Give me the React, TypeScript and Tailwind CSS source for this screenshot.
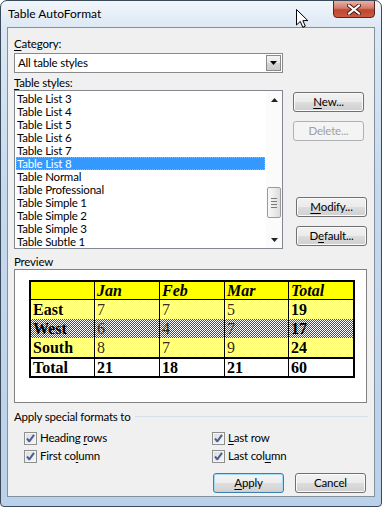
import React from 'react';

const styles = [
  'Table List 3',
  'Table List 4',
  'Table List 5',
  'Table List 6',
  'Table List 7',
  'Table List 8',
  'Table Normal',
  'Table Professional',
  'Table Simple 1',
  'Table Simple 2',
  'Table Simple 3',
  'Table Subtle 1',
];

const rows = [
  { label: 'East', values: ['7', '7', '5'], total: '19', pattern: 'yellow' },
  { label: 'West', values: ['6', '4', '7'], total: '17', pattern: 'red' },
  { label: 'South', values: ['8', '7', '9'], total: '24', pattern: 'yellow' },
];

function VistaButton({
  children,
  disabled,
  isDefault,
}: {
  children: React.ReactNode;
  disabled?: boolean;
  isDefault?: boolean;
}) {
  if (disabled) {
    return (
      <div className="w-[71px] h-[20px] rounded-[3px] border border-[#adb2b5] bg-[#f4f4f4] flex items-center justify-center text-[#a0a0a0] leading-none">
        {children}
      </div>
    );
  }
  return (
    <div
      className={
        isDefault
          ? 'w-[71px] h-[20px] rounded-[3px] border border-[#3c7fb1] bg-[linear-gradient(180deg,#f4f4f4_0%,#ececec_50%,#dedede_50%,#d2d2d2_100%)] shadow-[inset_0_0_0_1px_#a8daf6] flex items-center justify-center leading-none'
          : 'w-[71px] h-[20px] rounded-[3px] border border-[#707070] bg-[linear-gradient(180deg,#f2f2f2_0%,#ebebeb_50%,#dddddd_50%,#cfcfcf_100%)] shadow-[inset_0_0_0_1px_#fbfbfb] flex items-center justify-center leading-none'
      }
    >
      {children}
    </div>
  );
}

function CheckBox({ label }: { label: React.ReactNode }) {
  return (
    <div className="h-[18px] flex items-center gap-[3px]">
      <div className="w-[13px] h-[13px] border border-[#8e8f8f] bg-[linear-gradient(135deg,#dcdcdc_0%,#f6f6f6_100%)] shadow-[inset_0_0_0_1px_#f4f4f4] flex items-center justify-center">
        <svg width="11" height="11" viewBox="0 0 11 11">
          <path d="M2 5.5 L4.3 8.3 L9 1.8" fill="none" stroke="#4a5f92" strokeWidth="2" strokeLinejoin="round" />
        </svg>
      </div>
      <span className="leading-none">{label}</span>
    </div>
  );
}

function Cell({
  children,
  w,
  className = '',
}: {
  children?: React.ReactNode;
  w: string;
  className?: string;
}) {
  return <div className={`${w} pl-[2px] ${className}`}>{children}</div>;
}

export default function App() {
  return (
    <div className="w-[382px] h-[507px] relative overflow-hidden rounded-t-[7px] rounded-b-[4px] border border-[#3b4a5a] bg-[linear-gradient(180deg,#f2f6fb_0px,#dce8f4_26px,#c6daee_180px,#bad1ea_100%)] flex flex-col font-['Lato','Noto_Sans',sans-serif] text-[11.5px] tracking-[-0.2px] text-black">
      {/* Title bar */}
      <div className="h-[26px] pl-[7px] flex items-center text-[12px] tracking-normal text-black">Table AutoFormat</div>

      {/* Close button */}
      <div className="absolute top-[-1px] right-[6px] w-[42px] h-[18px] rounded-b-[4px] border border-[#5b231d] bg-[linear-gradient(180deg,#eab1a6_0%,#d47a6b_45%,#c0462f_55%,#c95a3e_100%)] flex items-center justify-center">
        <svg width="14" height="11" viewBox="0 0 14 11">
          <path d="M2 1.5 L12 9.5 M12 1.5 L2 9.5" stroke="#4a1a14" strokeWidth="4" strokeLinecap="square" />
          <path d="M2 1.5 L12 9.5 M12 1.5 L2 9.5" stroke="#ffffff" strokeWidth="2" strokeLinecap="square" />
        </svg>
      </div>

      {/* Mouse cursor */}
      <svg className="absolute left-[295px] top-[8px]" width="13" height="20" viewBox="0 0 13 20">
        <path d="M0.5 0.5 L0.5 16 L4.3 12.4 L6.8 18.3 L9.3 17.2 L6.9 11.6 L11.8 11.6 Z" fill="#ffffff" stroke="#000000" strokeWidth="1" strokeLinejoin="round" />
      </svg>

      {/* Client area */}
      <div className="mx-[6px] h-[470px] border border-[#83909e] bg-[#f0f0f0] px-[6px] pt-[8px] flex flex-col">
        <div className="h-[15px] leading-[15px]">
          <span className="underline underline-offset-2">C</span>ategory:
        </div>
        <div className="mt-[2px] w-[269px] h-[20px] border border-[#8a8a8a] bg-white flex items-center">
          <span className="flex-1 pl-[3px] leading-none">All table styles</span>
          <div className="w-[15px] h-[16px] mr-[1px] border border-[#8a8a8a] bg-[linear-gradient(180deg,#f4f4f4_0%,#e6e6e6_50%,#d4d4d4_51%,#cbcbcb_100%)] flex items-center justify-center">
            <svg width="7" height="4" viewBox="0 0 7 4">
              <path d="M0 0 L7 0 L3.5 4 Z" fill="#000" />
            </svg>
          </div>
        </div>
        <div className="mt-[2px] h-[15px] leading-[15px]">
          <span className="underline underline-offset-2">T</span>able styles:
        </div>

        <div className="flex">
          {/* List box */}
          <div className="w-[269px] h-[159px] border border-[#828790] bg-white flex">
            <div className="flex-1 pt-[1px] px-[1px]">
              {styles.map((s) =>
                s === 'Table List 8' ? (
                  <div
                    key={s}
                    className="h-[13px] leading-[13px] pl-[1px] bg-[#3399ff] text-white outline outline-1 outline-dotted outline-[#f0a040] -outline-offset-1"
                  >
                    {s}
                  </div>
                ) : (
                  <div key={s} className="h-[13px] leading-[13px] pl-[1px]">
                    {s}
                  </div>
                )
              )}
            </div>
            {/* Scrollbar */}
            <div className="w-[16px] flex flex-col bg-[#fbfbfb]">
              <div className="h-[17px] flex items-center justify-center">
                <svg width="7" height="4" viewBox="0 0 7 4">
                  <path d="M0 4 L7 4 L3.5 0 Z" fill="#222" />
                </svg>
              </div>
              <div className="flex-1 flex flex-col">
                <div className="h-[79px]" />
                <div className="ml-[1px] w-[14px] h-[31px] rounded-[2px] border border-[#9b9b9b] bg-[linear-gradient(90deg,#f8f8f8_0%,#ececec_50%,#dcdcdc_100%)] flex flex-col items-center justify-center gap-[2px]">
                  <div className="w-[6px] h-px bg-[#7a7a7a]" />
                  <div className="w-[6px] h-px bg-[#7a7a7a]" />
                  <div className="w-[6px] h-px bg-[#7a7a7a]" />
                  <div className="w-[6px] h-px bg-[#7a7a7a]" />
                </div>
              </div>
              <div className="h-[17px] flex items-center justify-center">
                <svg width="7" height="4" viewBox="0 0 7 4">
                  <path d="M0 0 L7 0 L3.5 4 Z" fill="#222" />
                </svg>
              </div>
            </div>
          </div>

          {/* Right buttons */}
          <div className="ml-[10px] pt-[2px] flex flex-col">
            <VistaButton>
              <span className="underline underline-offset-2">N</span>ew...
            </VistaButton>
            <div className="mt-[9px]">
              <VistaButton disabled>Delete...</VistaButton>
            </div>
            <div className="mt-[56px] ml-[3px]">
              <VistaButton>
                <span className="underline underline-offset-2">M</span>odify...
              </VistaButton>
            </div>
            <div className="mt-[9px] ml-[3px]">
              <VistaButton>
                D<span className="underline underline-offset-2">e</span>fault...
              </VistaButton>
            </div>
          </div>
        </div>

        <div className="mt-[5px] h-[15px] leading-[15px]">Preview</div>
        <div className="w-[353px] h-[134px] border border-[#828282] bg-white pt-[10px] pl-[14px]">
          <div className="w-[326px] border-2 border-black font-['Liberation_Serif',serif] text-[16px] tracking-normal leading-[19px]">
            {/* Header */}
            <div className="flex h-[18px] bg-[#ffff00] border-b border-black font-bold italic leading-[18px]">
              <Cell w="w-[64px]" className="border-r border-black" />
              <Cell w="w-[65px]" className="border-r border-black">Jan</Cell>
              <Cell w="w-[65px]" className="border-r border-black">Feb</Cell>
              <Cell w="w-[64px]" className="border-r border-black">Mar</Cell>
              <Cell w="w-[64px]">Total</Cell>
            </div>
            {rows.map((r) => (
              <div
                key={r.label}
                className={
                  r.pattern === 'red'
                    ? 'flex h-[19px] bg-[image:repeating-conic-gradient(#ff0000_0_25%,#ffffff_0_50%)] bg-[length:2px_2px]'
                    : 'flex h-[19px] bg-[image:repeating-conic-gradient(#ffff70_0_25%,#ffffff_0_50%)] bg-[length:2px_2px]'
                }
              >
                <Cell w="w-[64px]" className="border-r border-black font-bold">{r.label}</Cell>
                <Cell w="w-[65px]" className="border-r border-black text-[#3a2a1a]">{r.values[0]}</Cell>
                <Cell w="w-[65px]" className="border-r border-black text-[#3a2a1a]">{r.values[1]}</Cell>
                <Cell w="w-[64px]" className="border-r border-black text-[#3a2a1a]">{r.values[2]}</Cell>
                <Cell w="w-[64px]" className="font-bold">{r.total}</Cell>
              </div>
            ))}
            <div className="flex h-[19px] border-t-2 border-black font-bold leading-[17px]">
              <Cell w="w-[64px]" className="border-r border-black">Total</Cell>
              <Cell w="w-[65px]" className="border-r border-black">21</Cell>
              <Cell w="w-[65px]" className="border-r border-black">18</Cell>
              <Cell w="w-[64px]" className="border-r border-black">21</Cell>
              <Cell w="w-[64px]">60</Cell>
            </div>
          </div>
        </div>

        <div className="mt-[6px] h-[15px] flex items-center gap-[4px]">
          <span className="leading-[15px]">Apply special formats to</span>
          <div className="flex-1 h-px bg-[#d5dfe5]" />
        </div>
        <div className="mt-[5px] pl-[10px] grid grid-cols-[188px_1fr]">
          <CheckBox
            label={
              <>
                Heading <span className="underline underline-offset-2">r</span>ows
              </>
            }
          />
          <CheckBox
            label={
              <>
                <span className="underline underline-offset-2">L</span>ast row
              </>
            }
          />
          <CheckBox
            label={
              <>
                First co<span className="underline underline-offset-2">l</span>umn
              </>
            }
          />
          <CheckBox
            label={
              <>
                Last col<span className="underline underline-offset-2">u</span>mn
              </>
            }
          />
        </div>
        <div className="mt-[8px] flex justify-end gap-[11px] pr-[2px]">
          <VistaButton isDefault>
            <span className="underline underline-offset-2">A</span>pply
          </VistaButton>
          <VistaButton>Cancel</VistaButton>
        </div>
      </div>
    </div>
  );
}
